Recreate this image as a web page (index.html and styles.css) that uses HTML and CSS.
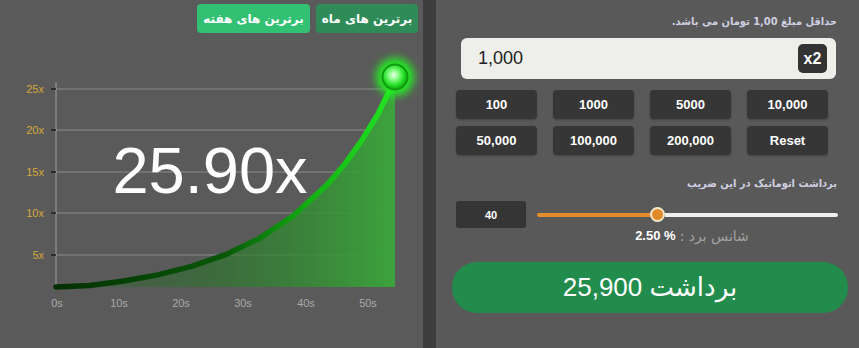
FILE: index.html
```html
<!DOCTYPE html>
<html lang="fa">
<head>
<meta charset="utf-8">
<link rel="stylesheet" href="styles.css">
</head>
<body>
<div class="page">
  <div class="left">
    <div class="tabs">
      <button class="tab tab-week">برترین های هفته</button>
      <button class="tab tab-month">برترین های ماه</button>
    </div>
    <svg class="chart" width="423" height="311" viewBox="0 37 423 311">
      <defs>
        <linearGradient id="fillg" x1="56" y1="0" x2="395" y2="0" gradientUnits="userSpaceOnUse">
          <stop offset="0" stop-color="#1a5a1a" stop-opacity="0.15"/>
          <stop offset="0.5" stop-color="#2a7a2a" stop-opacity="0.6"/>
          <stop offset="1" stop-color="#3ca43c" stop-opacity="1"/>
        </linearGradient>
        <linearGradient id="lineg" x1="56" y1="0" x2="395" y2="0" gradientUnits="userSpaceOnUse">
          <stop offset="0" stop-color="#043004"/>
          <stop offset="0.5" stop-color="#085808"/>
          <stop offset="0.75" stop-color="#12b012"/>
          <stop offset="1" stop-color="#22e622"/>
        </linearGradient>
        <radialGradient id="dotg" cx="0.45" cy="0.42" r="0.6">
          <stop offset="0" stop-color="#f0fff0"/>
          <stop offset="0.3" stop-color="#8cff8c"/>
          <stop offset="0.7" stop-color="#22dd22"/>
          <stop offset="1" stop-color="#0c9a0c"/>
        </radialGradient>
        <filter id="glow" x="-1" y="-1" width="3" height="3">
          <feGaussianBlur stdDeviation="4"/>
        </filter>
      </defs>
      <g class="grid">
        <line x1="56" y1="89" x2="392" y2="89"/>
        <line x1="56" y1="130" x2="395" y2="130"/>
        <line x1="56" y1="172" x2="395" y2="172"/>
        <line x1="56" y1="213" x2="395" y2="213"/>
        <line x1="56" y1="255" x2="385" y2="255"/>
      </g>
      <line class="yaxis" x1="56" y1="82" x2="56" y2="288"/>
      <g class="ticks">
        <line x1="51" y1="89" x2="56" y2="89"/>
        <line x1="51" y1="130" x2="56" y2="130"/>
        <line x1="51" y1="172" x2="56" y2="172"/>
        <line x1="51" y1="213" x2="56" y2="213"/>
        <line x1="51" y1="255" x2="56" y2="255"/>
      </g>
      <g class="ylabels">
        <text x="44" y="93">25x</text>
        <text x="44" y="134">20x</text>
        <text x="44" y="176">15x</text>
        <text x="44" y="217">10x</text>
        <text x="44" y="259">5x</text>
      </g>
      <g class="xlabels">
        <text x="57" y="307">0s</text>
        <text x="119" y="307">10s</text>
        <text x="181" y="307">20s</text>
        <text x="243" y="307">30s</text>
        <text x="306" y="307">40s</text>
        <text x="368" y="307">50s</text>
      </g>
      <path class="area" d="M56,287 L89.9,285.5 L123.8,281 L157.7,274.9 L191.6,266.4 L225.5,254.7 L259.4,238.4 L293.3,215.8 L327.2,184.6 L344.2,164.8 L361.1,141.4 L378,113.9 L395,79 L395,287 Z" fill="url(#fillg)"/>
      <text class="mult" x="210" y="193">25.90x</text>
      <path class="curve" d="M56,287 L89.9,285.5 L123.8,281 L157.7,274.9 L191.6,266.4 L225.5,254.7 L259.4,238.4 L293.3,215.8 L327.2,184.6 L344.2,164.8 L361.1,141.4 L378,113.9 L395,79" stroke="url(#lineg)"/>
      <circle cx="395" cy="77" r="19" fill="#22ee22" filter="url(#glow)"/>
      <circle cx="395" cy="77" r="12.5" fill="url(#dotg)" stroke="#119911" stroke-width="2"/>
    </svg>
  </div>
  <div class="divider"></div>
  <div class="right">
    <div class="label">حداقل مبلغ 1,00 تومان می باشد.</div>
    <div class="amount">
      <span class="amount-value">1,000</span>
      <button class="x2">x2</button>
    </div>
    <div class="presets">
      <button class="preset">100</button>
      <button class="preset">1000</button>
      <button class="preset">5000</button>
      <button class="preset">10,000</button>
      <button class="preset">50,000</button>
      <button class="preset">100,000</button>
      <button class="preset">200,000</button>
      <button class="preset">Reset</button>
    </div>
    <div class="label label2">برداشت اتوماتیک در این ضریب</div>
    <div class="auto">
      <div class="auto-box">40</div>
      <div class="slider">
        <div class="track-fill"></div>
        <div class="thumb"></div>
        <div class="track-rest"></div>
      </div>
    </div>
    <div class="chance"><span class="chance-val">2.50 %</span><span class="chance-lbl">شانس برد :</span></div>
    <button class="cashout">برداشت 25,900</button>
  </div>
</div>
</body>
</html>
```

FILE: styles.css
```css
* { box-sizing: border-box; }
html, body { margin: 0; padding: 0; }
body {
  width: 859px;
  height: 348px;
  overflow: hidden;
  background: #595959;
  font-family: "Liberation Sans", "DejaVu Sans", sans-serif;
}
button { font-family: inherit; border: 0; padding: 0; cursor: pointer; }
.page { display: flex; height: 348px; }
.left { width: 423px; display: flex; flex-direction: column; background: #5a5a5a; }
.tabs { display: flex; justify-content: flex-end; gap: 6px; padding: 4px 5px 0 0; height: 37px; }
.tab {
  height: 29px;
  border-radius: 4px;
  color: #fff;
  font-weight: bold;
  font-size: 12px;
  font-family: "DejaVu Sans", sans-serif;
  direction: rtl;
}
.tab-week { width: 113px; background: #32c072; }
.tab-month { width: 102px; background: #2f8b58; }
.chart { display: block; }
.grid line { stroke: #8c8c8c; stroke-width: 1; }
.yaxis { stroke: #a0a0a0; stroke-width: 1; }
.ticks line { stroke: #1c1c1c; stroke-width: 1.5; }
.ylabels text { fill: #d6a93a; font-size: 11px; text-anchor: end; font-family: "Liberation Sans", sans-serif; }
.xlabels text { fill: #a9a9a9; font-size: 11px; text-anchor: middle; font-family: "Liberation Sans", sans-serif; }
.mult { fill: #fff; font-size: 65px; text-anchor: middle; font-family: "Liberation Sans", sans-serif; }
.curve { fill: none; stroke-width: 5.5; stroke-linecap: round; stroke-linejoin: round; }
.divider { width: 13px; background: #3e3e3e; }
.right { flex: 1; padding: 14px 11px 0 16px; display: flex; flex-direction: column; background: #595959; }
.label {
  height: 16px;
  line-height: 16px;
  text-align: right;
  padding-right: 11px;
  direction: rtl;
  color: #cfcfe0;
  font-size: 11px;
  font-weight: bold;
  font-stretch: condensed;
  font-family: "DejaVu Sans", sans-serif;
}
.amount {
  margin: 8px 12px 0 9px;
  height: 41px;
  background: #eeeeea;
  border-radius: 6px;
  display: flex;
  align-items: center;
  justify-content: space-between;
  padding: 0 9px 0 17px;
}
.amount-value { font-size: 18px; color: #222; }
.x2 {
  width: 29px; height: 29px;
  background: #333;
  color: #fff;
  border-radius: 5px;
  font-weight: bold;
  font-size: 16px;
}
.presets {
  margin: 11px 0 0 4px;
  width: 372px;
  display: grid;
  grid-template-columns: repeat(4, 81px);
  column-gap: 16px;
  row-gap: 7px;
}
.preset {
  height: 29px;
  background: #363636;
  color: #fff;
  border-radius: 4px;
  font-weight: bold;
  font-size: 13px;
  box-shadow: 0 1px 2px rgba(0,0,0,0.25);
}
.label2 { margin-top: 21px; }
.auto { margin: 9px 10px 0 4px; height: 27px; display: flex; align-items: center; gap: 11px; }
.auto-box {
  width: 70px; height: 27px;
  background: #353535;
  border-radius: 3px;
  color: #fff;
  font-weight: bold;
  font-size: 11px;
  display: flex; align-items: center; justify-content: center;
}
.slider { flex: 1; display: flex; align-items: center; height: 16px; }
.track-fill { width: 113px; height: 4px; background: #e38d2c; border-radius: 2px 0 0 2px; }
.thumb {
  width: 15px; height: 15px;
  border-radius: 50%;
  background: #e08a2a;
  border: 2px solid #f6e8c8;
  flex: none;
}
.track-rest { flex: 1; height: 4px; background: #efefef; border-radius: 0 2px 2px 0; }
.chance {
  margin-top: 1px;
  height: 14px;
  line-height: 14px;
  display: flex;
  justify-content: center;
  gap: 4px;
  padding-left: 84px;
}
.chance-val { color: #fff; font-weight: bold; font-size: 13px; }
.chance-lbl { color: #a3a3a3; font-size: 14px; font-family: "DejaVu Sans", sans-serif; direction: rtl; }
.cashout {
  margin-top: 19px;
  height: 51px;
  border-radius: 25px;
  background: #218c4c;
  color: #fff;
  font-size: 26px;
  direction: rtl;
}
```
